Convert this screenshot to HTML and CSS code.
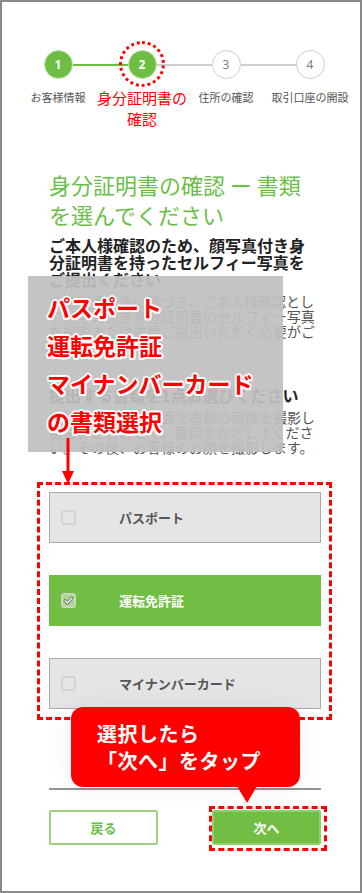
FILE: index.html
```html
<!DOCTYPE html>
<html lang="ja">
<head>
<meta charset="utf-8">
<title>身分証明書の確認</title>
<link rel="stylesheet" href="styles.css">
</head>
<body>
<div class="frame">
  <div class="steps">
    <span class="dot done">1</span>
    <span class="bar done"></span>
    <span class="dot done">2</span>
    <span class="bar"></span>
    <span class="dot">3</span>
    <span class="bar"></span>
    <span class="dot">4</span>
  </div>
  <div class="labels">
    <div class="label"><span>お客様情報</span></div>
    <div class="label current"><span>身分証明書の<br>確認</span></div>
    <div class="label"><span>住所の確認</span></div>
    <div class="label"><span>取引口座の開設</span></div>
  </div>

  <div class="content">
    <h1 class="title">身分証明書の確認 ー 書類<br>を選んでください</h1>
    <p class="lead">ご本人様確認のため、顔写真付き身<br>分証明書を持ったセルフィー写真を<br>ご提出ください</p>
    <p class="note">金融関連法令に基づき、ご本人様確認とし<br>て顔写真付き身分証明書のセルフィー写真<br>を撮影または書類ご提出いただく必要がご<br>ざいます。</p>
    <p class="lead sub">提出する書類を1点お選びください</p>
    <p class="note">次に表示される画面で書類の画像を撮影し<br>撮影枠に合わせて、書類をかざしてくださ<br>い。その後、お客様のお顔を撮影します。</p>

    <div class="options">
      <div class="option">
        <span class="check"></span>
        <span class="opt-text">パスポート</span>
      </div>
      <div class="option selected">
        <span class="check on">
          <svg viewBox="0 0 12 12" width="11" height="11"><path d="M2.2 6.3 L4.8 8.8 L9.8 3.2" fill="none" stroke="#4a4a4a" stroke-width="3" stroke-linecap="round" stroke-linejoin="round"/><path d="M2.2 6.3 L4.8 8.8 L9.8 3.2" fill="none" stroke="#fff" stroke-width="1.6" stroke-linecap="round" stroke-linejoin="round"/></svg>
        </span>
        <span class="opt-text">運転免許証</span>
      </div>
      <div class="option">
        <span class="check"></span>
        <span class="opt-text">マイナンバーカード</span>
      </div>
    </div>

    <div class="divider"></div>
    <div class="buttons">
      <button class="btn back">戻る</button>
      <button class="btn next">次へ</button>
    </div>
  </div>

  <!-- annotations -->
  <div class="ring"></div>
  <div class="shade">
    <div class="shade-text">パスポート<br>運転免許証<br>マイナンバーカード<br>の書類選択</div>
  </div>
  <svg class="arrow" viewBox="0 0 12 46" width="12" height="46"><rect x="4.5" y="0" width="3" height="36" fill="#f00"/><path d="M0 33 L12 33 L6 46 Z" fill="#f00"/></svg>
  <div class="dash-box"></div>
  <div class="callout">
    <div class="callout-text">選択したら<br>「次へ」をタップ</div>
  </div>
  <div class="dash-next"></div>
</div>
</body>
</html>
```

FILE: styles.css
```css
* { box-sizing: border-box; }
html, body { margin: 0; padding: 0; background: #fff; }
.frame {
  position: relative;
  width: 362px;
  height: 893px;
  border: 2px solid #8a8a8a;
  background: #fff;
  overflow: hidden;
  font-family: "Noto Sans CJK JP", "Noto Sans", sans-serif;
  color: #222;
}

/* stepper */
.steps {
  display: flex;
  align-items: center;
  padding: 48px 0 0 41.5px;
}
.dot {
  width: 29px;
  height: 29px;
  border-radius: 50%;
  border: 1.5px solid #cfcfcf;
  background: #fff;
  color: #777;
  font-size: 12px;
  display: flex;
  align-items: center;
  justify-content: center;
  flex: none;
  font-family: "Open Sans", sans-serif;
}
.dot.done {
  background: #6fbe44;
  border-color: #c8e6b5;
  color: #fff;
  font-weight: 700;
}
.bar {
  width: 55px;
  height: 2px;
  background: #cfcfcf;
  flex: none;
}
.bar.done { background: #6fbe44; }

.labels {
  display: grid;
  grid-template-columns: repeat(4, 84px);
  padding-left: 14px;
  margin-top: 7.5px;
}
.label {
  display: flex;
  justify-content: center;
  white-space: nowrap;
  font-size: 11px;
  line-height: 21px;
  color: #555;
}
.label span { text-align: center; }
.label.current {
  font-size: 15px;
  color: #f00;
}

/* content */
.content {
  padding: 0 39px 0 47px;
}
.title {
  margin: 40.5px 0 0;
  font-size: 22px;
  line-height: 30px;
  font-weight: 400;
  color: #6cbe4a;
}
.lead {
  margin: 7.5px 0 0;
  font-size: 16px;
  line-height: 17px;
  font-weight: 700;
  color: #222;
}
.lead.sub { margin-top: 33px; }
.note {
  margin: 6px 0 0;
  font-size: 14px;
  line-height: 15px;
  color: #555;
  white-space: nowrap;
}

.options {
  margin-top: 37.5px;
  display: flex;
  flex-direction: column;
  gap: 32px;
}
.option {
  height: 51px;
  display: flex;
  align-items: center;
  padding-left: 11px;
  background: #e5e5e5;
  border: 1px solid #a9a9a9;
}
.option.selected {
  background: #72be44;
  border-color: #72be44;
}
.check {
  width: 15px;
  height: 15px;
  border: 2px solid #d2d2d2;
  border-radius: 3px;
  background: #e6e6e6;
  display: flex;
  align-items: center;
  justify-content: center;
  flex: none;
}
.check.on {
  border-color: #c9d9bf;
  background: #a9d38f;
}
.opt-text {
  margin-left: 43px;
  font-size: 13px;
  font-weight: 700;
  color: #555;
}
.option.selected .opt-text { color: #fff; }

.divider {
  margin-top: 79px;
  height: 2px;
  background: #939393;
}
.buttons {
  margin-top: 20px;
  display: flex;
  justify-content: space-between;
}
.btn {
  width: 109px;
  height: 35px;
  font-family: inherit;
  font-size: 13px;
  font-weight: 700;
  border-radius: 2px;
  padding: 0;
}
.btn.back {
  background: #fff;
  border: 2px solid #9dd07f;
  color: #6cbe4a;
}
.btn.next {
  background: #72be44;
  border: 2px solid #8fd06a;
  color: #fff;
}

/* annotations */
.ring {
  position: absolute;
  left: 117px;
  top: 39px;
  width: 46px;
  height: 46px;
  border: 3px dotted #f00;
  border-radius: 50%;
}
.shade {
  position: absolute;
  left: 26px;
  top: 274px;
  width: 255px;
  height: 176px;
  background: rgba(192, 192, 192, 0.93);
  padding: 12px 0 0 19px;
}
.shade-text {
  font-size: 23px;
  line-height: 38px;
  font-weight: 700;
  color: #f00;
  white-space: nowrap;
  text-shadow:
    2px 0 0 #fff, -2px 0 0 #fff, 0 2px 0 #fff, 0 -2px 0 #fff,
    1.5px 1.5px 0 #fff, -1.5px 1.5px 0 #fff, 1.5px -1.5px 0 #fff, -1.5px -1.5px 0 #fff;
}
.arrow {
  position: absolute;
  left: 60px;
  top: 436px;
}
.dash-box {
  position: absolute;
  left: 35px;
  top: 480px;
  width: 295px;
  height: 238px;
  border: 3px dashed #f00;
}
.callout {
  position: absolute;
  left: 69px;
  top: 705px;
  width: 229px;
  height: 80px;
  background: #f00;
  border-radius: 12px;
  padding: 12.5px 0 0 26px;
  box-shadow: 0 0 24px rgba(0, 0, 0, 0.07);
}
.callout::after {
  content: "";
  position: absolute;
  left: 166px;
  top: 79px;
  border-left: 10px solid transparent;
  border-right: 10px solid transparent;
  border-top: 17px solid #f00;
}
.callout-text {
  font-size: 20px;
  line-height: 27px;
  font-weight: 700;
  color: #fff;
  letter-spacing: 0.5px;
  white-space: nowrap;
}
.dash-next {
  position: absolute;
  left: 207px;
  top: 804px;
  width: 118px;
  height: 45px;
  border: 3px dashed #f00;
}
```
